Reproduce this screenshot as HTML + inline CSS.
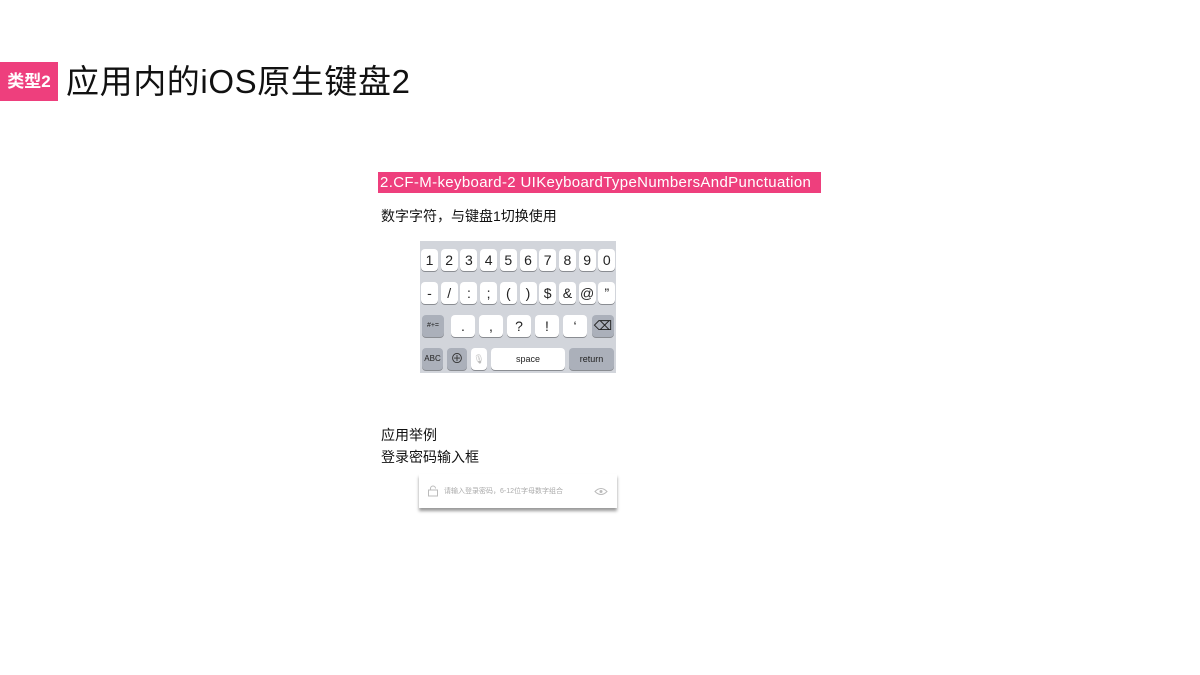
<!DOCTYPE html><html><head><meta charset="utf-8"><style>
body{margin:0;width:1200px;height:675px;background:#fff;position:relative;overflow:hidden;font-family:"Liberation Sans","Noto Sans CJK SC",sans-serif}
.a{position:absolute}
.k{position:absolute;background:#fff;border-radius:4px;box-shadow:0 1px 0 #8a8d92;font-size:14px;text-align:center;color:#222}
.g{background:#abb0ba}
</style></head><body>
<div class="a" style="left:0;top:62px;width:58px;height:39px;background:#ee3f7d;color:#fff;font-weight:bold;font-size:17px;line-height:39px;text-align:center">类型2</div>
<div class="a" style="left:66px;top:59px;font-size:33px;letter-spacing:0.6px;line-height:46px;color:#111">应用内的iOS原生键盘2</div>
<div class="a" style="left:378px;top:172px;width:443px;height:21px;background:#ee3f7d;color:#fff;font-size:15px;letter-spacing:0.35px;line-height:22px;padding-left:2px;box-sizing:border-box">2.CF-M-keyboard-2 UIKeyboardTypeNumbersAndPunctuation</div>
<div class="a" style="left:381px;top:206px;font-size:14px;line-height:20px;color:#111">数字字符，与键盘1切换使用</div>
<div class="a" style="left:420px;top:241px;width:196px;height:132px;background:#d2d5db"></div>
<div id="kb"></div>
<div class="a" style="left:381px;top:424px;font-size:14px;line-height:22px;color:#111">应用举例<br>登录密码输入框</div>
<div class="a" style="left:419px;top:474px;width:198px;height:34px;background:#fff;box-shadow:0 3px 3px #999"></div>
<svg class="a" style="left:427px;top:485px" width="12" height="12"><rect x="1.5" y="5" width="9" height="6" fill="none" stroke="#bbb"/><path d="M3.5 5V3.5a2.5 2.5 0 0 1 5 0" fill="none" stroke="#bbb"/></svg>
<div class="a" style="left:444px;top:487px;font-size:7px;color:#aaa;line-height:10px">请输入登录密码，6-12位字母数字组合</div>
<svg class="a" style="left:594px;top:487px" width="14" height="9"><path d="M1 4.5Q7 -1.5 13 4.5Q7 10.5 1 4.5Z" fill="none" stroke="#bbb"/><circle cx="7" cy="4.5" r="1.5" fill="#bbb"/></svg>
<script>
var h='';function k(x,y,w,t,c,fs){h+='<div class="k'+(c?' g':'')+'" style="left:'+x+'px;top:'+y+'px;width:'+w+'px;height:22px;line-height:22px;'+(fs?'font-size:'+fs+'px':'')+'">'+t+'</div>'}
var r1='1234567890'.split(''),r2=['-','/',':',';','(',')','$','&amp;','@','”'];
for(var i=0;i<10;i++){k(421+i*19.7,249,17,r1[i]);k(421+i*19.7,282,17,r2[i])}
k(422,315,22,'#+=',1,7);var r3=['.',',','?','!','‘'];var xs=[451,479,507,535,563];for(i=0;i<5;i++)k(xs[i],315,24,r3[i]);
k(592,315,22,'⌫',1,13);k(422,348,21,'ABC',1,8);k(447,348,20,'<span style="color:#333">⊕</span>',1,13);k(471,348,16,'<span style="color:#bbb">🎙</span>',0,9);k(491,348,74,'space',0,9);k(569,348,45,'return',1,9);
document.getElementById('kb').outerHTML=h;
</script>
</body></html>
